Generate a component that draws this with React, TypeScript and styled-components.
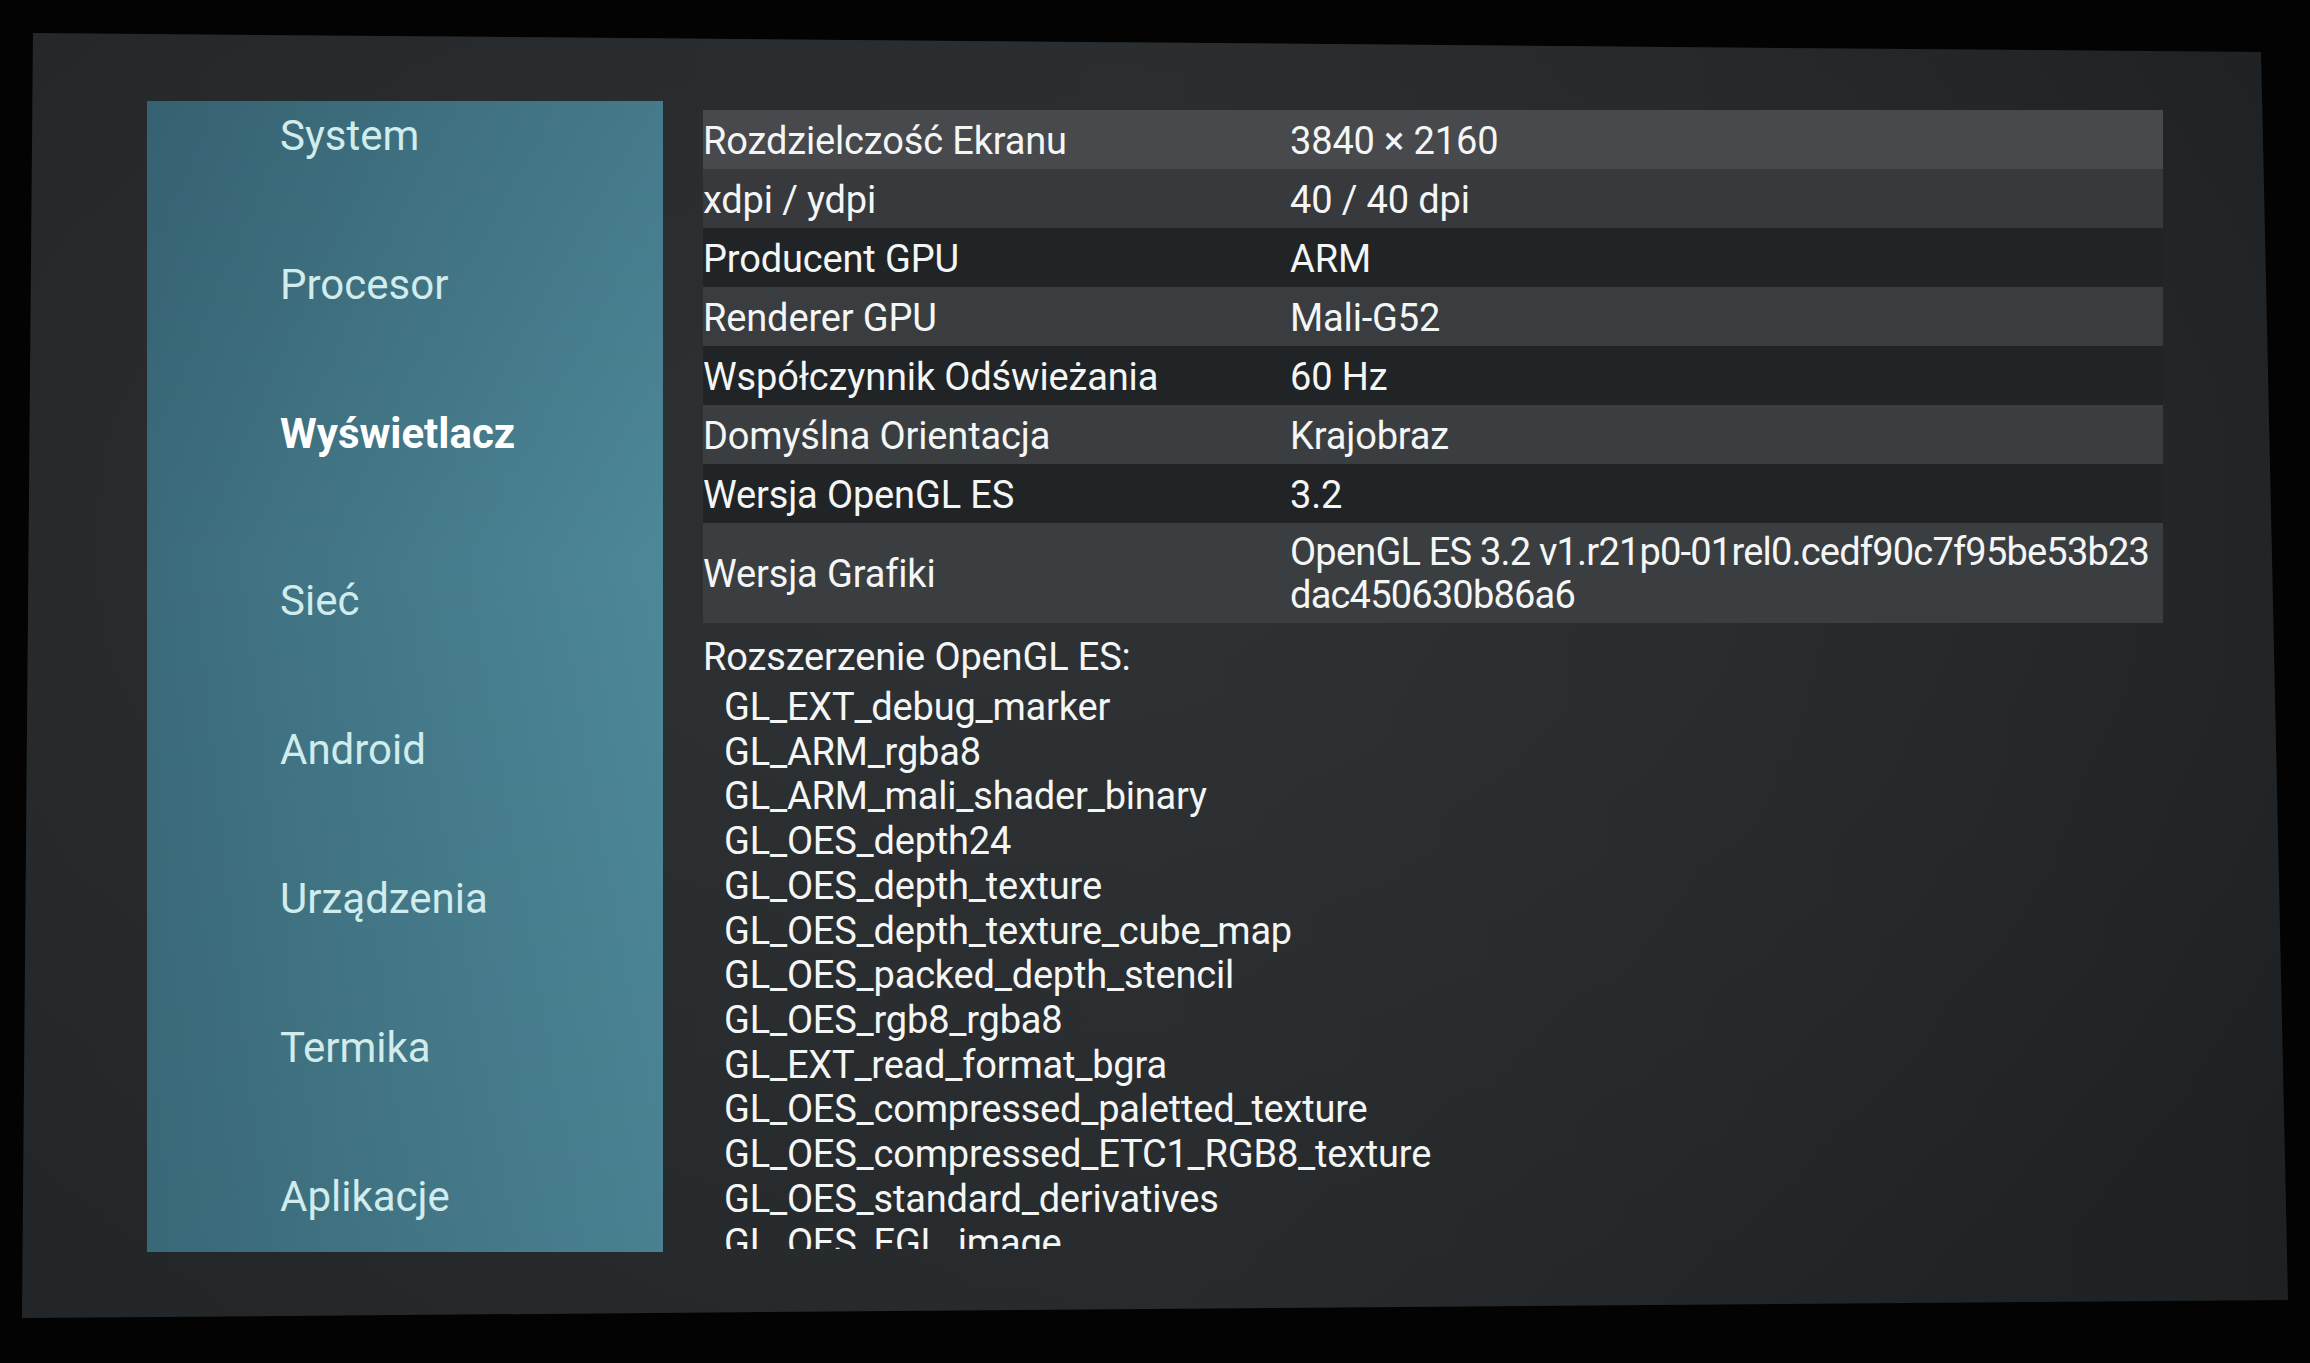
import React from "react";
import styled, { createGlobalStyle } from "styled-components";

const Global = createGlobalStyle`
  html, body {
    margin: 0;
    padding: 0;
    background: #030303;
    width: 2310px;
    height: 1363px;
    overflow: hidden;
  }
  * { box-sizing: border-box; }
`;

const Page = styled.div`
  width: 2310px;
  height: 1363px;
  padding: 33px 22px 45px 22px;
  display: flex;
  background: #030303;
  font-family: Roboto, "Noto Sans", "Liberation Sans", sans-serif;
`;

const Screen = styled.div`
  flex: 1;
  display: flex;
  gap: 40px;
  padding: 68px 0 0 125px;
  clip-path: polygon(11px 0, 2239px 19px, 100% calc(100% - 18px), 0 100%);
  background:
    radial-gradient(ellipse 70% 70% at 45% 40%, rgba(48, 51, 53, 0.9), rgba(30, 33, 35, 0) 100%),
    linear-gradient(90deg, #232628 0%, #272a2c 50%, #1e2123 100%);
`;

const Sidebar = styled.nav`
  width: 516px;
  height: 1151px;
  flex-shrink: 0;
  display: flex;
  flex-direction: column;
  padding: 10px 0 0 133px;
  gap: 99px;
  overflow: hidden;
  background:
    linear-gradient(180deg, rgba(20, 40, 50, 0.12) 0%, rgba(0, 0, 0, 0) 40%, rgba(20, 40, 50, 0.1) 100%),
    linear-gradient(95deg, #3a6979 0%, #447989 45%, #4f8b9c 100%);
`;

const NavItem = styled.div<{ $active?: boolean }>`
  height: 50px;
  line-height: 50px;
  font-size: 42px;
  white-space: nowrap;
  font-weight: ${(p) => (p.$active ? 700 : 400)};
  color: ${(p) => (p.$active ? "#ffffff" : "#d0ecec")};
  margin-bottom: ${(p) => (p.$active ? "18px" : "0")};
`;

const Main = styled.main`
  width: 1460px;
  height: 1148px;
  padding-top: 9px;
  overflow: hidden;
  color: #f4f6f6;
`;

const Table = styled.div`
  display: flex;
  flex-direction: column;
`;

const Row = styled.div<{ $bg: string; $tall?: boolean }>`
  display: grid;
  grid-template-columns: 587px 1fr;
  align-items: center;
  height: ${(p) => (p.$tall ? "100px" : "59px")};
  background: ${(p) => p.$bg};
  font-size: 38px;
  line-height: 59px;
  padding-top: 2px;
  letter-spacing: -0.15px;
`;

const Cell = styled.div`
  white-space: nowrap;
`;

const MultiCell = styled.div`
  line-height: 43px;
  white-space: nowrap;
  letter-spacing: -0.8px;
`;

const ExtTitle = styled.div`
  margin-top: 12px;
  font-size: 38px;
  line-height: 45px;
  letter-spacing: -0.15px;
`;

const ExtList = styled.div`
  margin-top: 5px;
  padding-left: 21px;
  display: flex;
  flex-direction: column;
`;

const ExtItem = styled.div`
  font-size: 38px;
  line-height: 44.7px;
  white-space: nowrap;
  letter-spacing: -0.2px;
`;

const nav = [
  "System",
  "Procesor",
  "Wyświetlacz",
  "Sieć",
  "Android",
  "Urządzenia",
  "Termika",
  "Aplikacje",
];

const rows: { label: string; value: string; bg: string }[] = [
  { label: "Rozdzielczość Ekranu", value: "3840 × 2160", bg: "#47494c" },
  { label: "xdpi / ydpi", value: "40 / 40 dpi", bg: "#37393c" },
  { label: "Producent GPU", value: "ARM", bg: "#212426" },
  { label: "Renderer GPU", value: "Mali-G52", bg: "#3a3d40" },
  { label: "Współczynnik Odświeżania", value: "60 Hz", bg: "#212426" },
  { label: "Domyślna Orientacja", value: "Krajobraz", bg: "#3b3e41" },
  { label: "Wersja OpenGL ES", value: "3.2", bg: "#212426" },
];

const extensions = [
  "GL_EXT_debug_marker",
  "GL_ARM_rgba8",
  "GL_ARM_mali_shader_binary",
  "GL_OES_depth24",
  "GL_OES_depth_texture",
  "GL_OES_depth_texture_cube_map",
  "GL_OES_packed_depth_stencil",
  "GL_OES_rgb8_rgba8",
  "GL_EXT_read_format_bgra",
  "GL_OES_compressed_paletted_texture",
  "GL_OES_compressed_ETC1_RGB8_texture",
  "GL_OES_standard_derivatives",
  "GL_OES_EGL_image",
  "GL_OES_EGL_image_external",
  "GL_OES_EGL_sync",
];

export default function App() {
  return (
    <>
      <Global />
      <Page>
        <Screen>
          <Sidebar>
            {nav.map((n) => (
              <NavItem key={n} $active={n === "Wyświetlacz"}>
                {n}
              </NavItem>
            ))}
          </Sidebar>
          <Main>
            <Table>
              {rows.map((r) => (
                <Row key={r.label} $bg={r.bg}>
                  <Cell>{r.label}</Cell>
                  <Cell>{r.value}</Cell>
                </Row>
              ))}
              <Row $bg="#3b3e41" $tall>
                <Cell>Wersja Grafiki</Cell>
                <MultiCell>
                  OpenGL ES 3.2 v1.r21p0-01rel0.cedf90c7f95be53b23
                  <br />
                  dac450630b86a6
                </MultiCell>
              </Row>
            </Table>
            <ExtTitle>Rozszerzenie OpenGL ES:</ExtTitle>
            <ExtList>
              {extensions.map((e) => (
                <ExtItem key={e}>{e}</ExtItem>
              ))}
            </ExtList>
          </Main>
        </Screen>
      </Page>
    </>
  );
}
